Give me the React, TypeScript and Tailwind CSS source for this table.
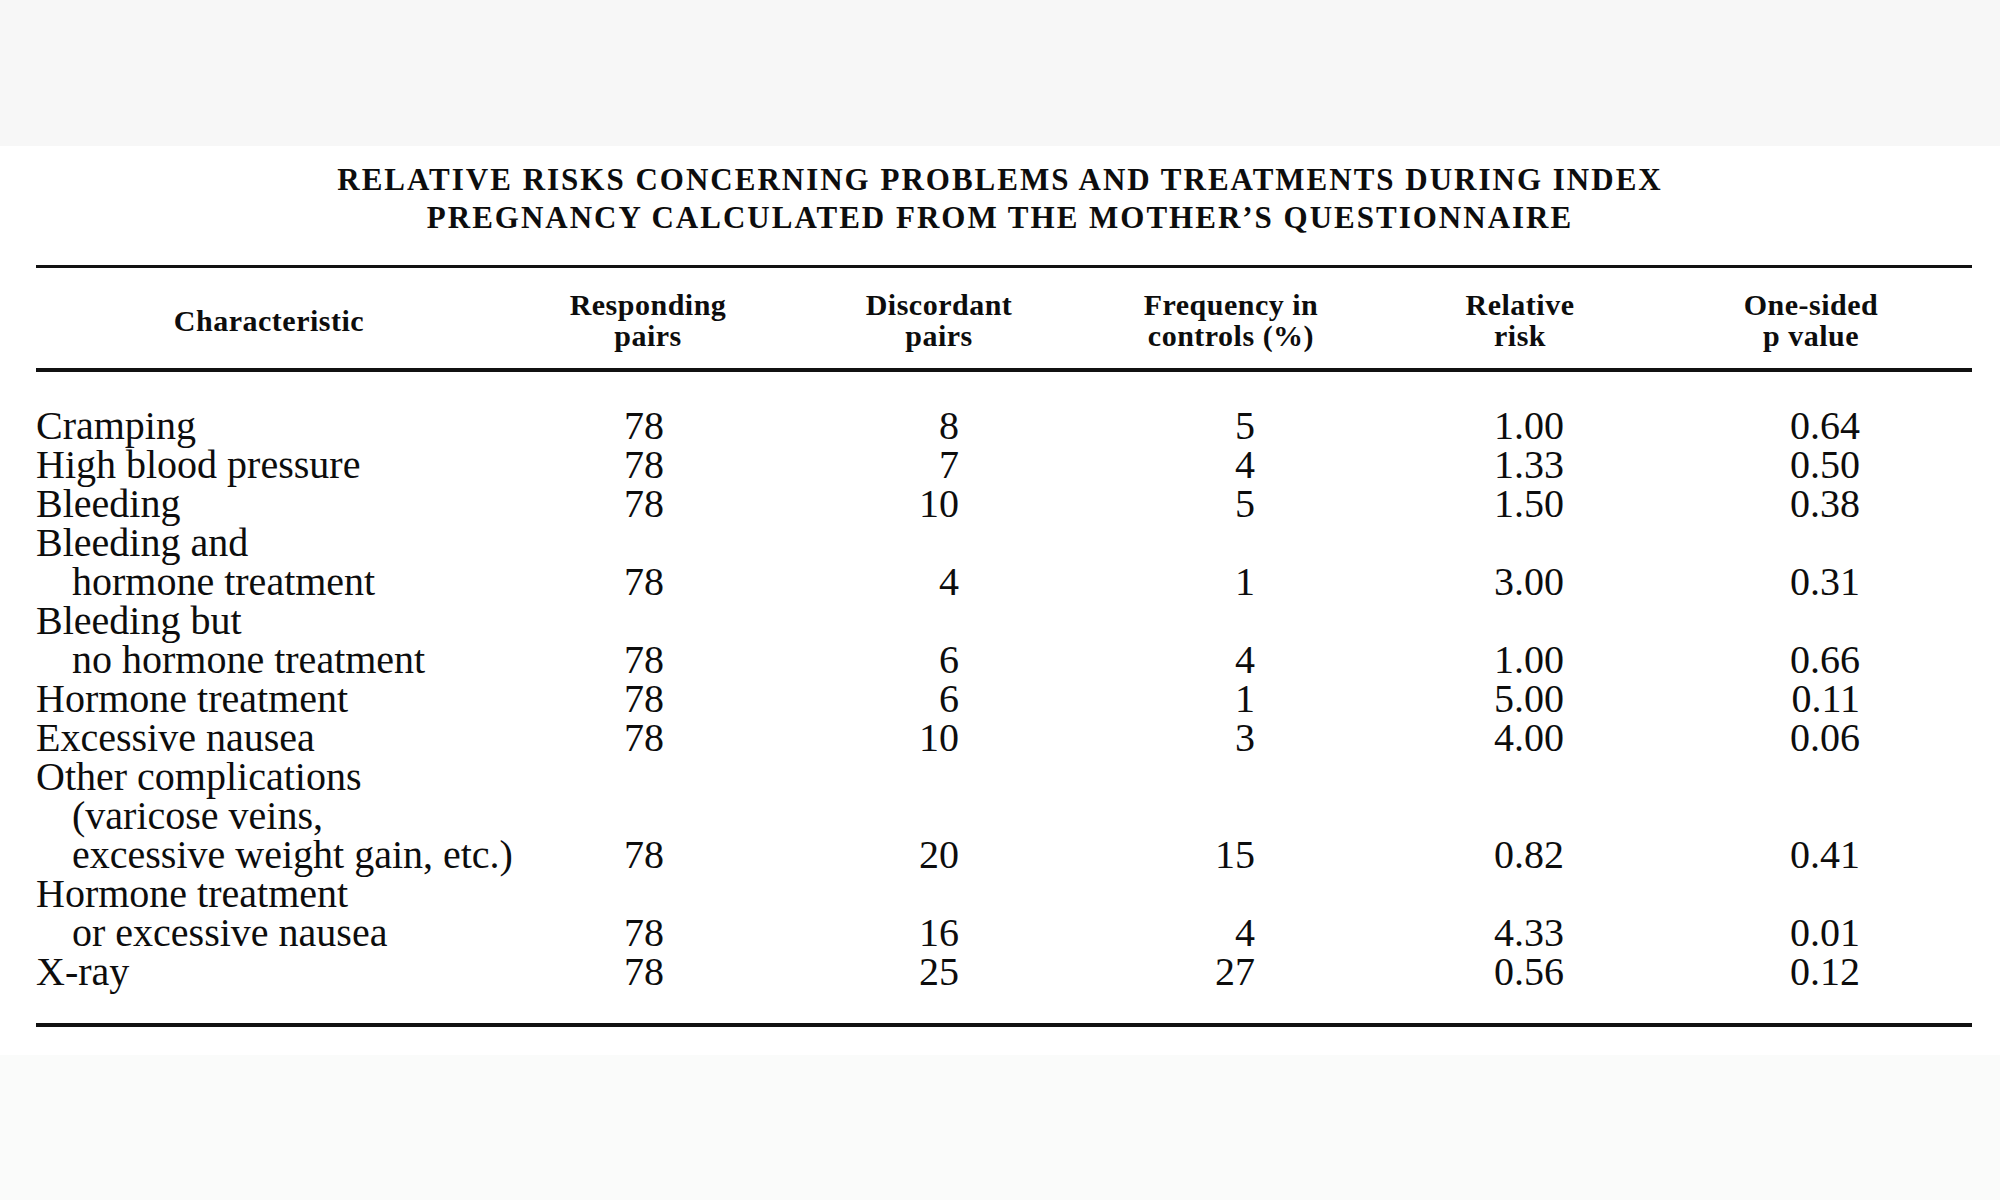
import React from "react";

type Row = { lines: string[]; v: string[] };

const rows: Row[] = [
  { lines: ["Cramping"], v: ["78", "8", "5", "1.00", "0.64"] },
  { lines: ["High blood pressure"], v: ["78", "7", "4", "1.33", "0.50"] },
  { lines: ["Bleeding"], v: ["78", "10", "5", "1.50", "0.38"] },
  { lines: ["Bleeding and", "hormone treatment"], v: ["78", "4", "1", "3.00", "0.31"] },
  { lines: ["Bleeding but", "no hormone treatment"], v: ["78", "6", "4", "1.00", "0.66"] },
  { lines: ["Hormone treatment"], v: ["78", "6", "1", "5.00", "0.11"] },
  { lines: ["Excessive nausea"], v: ["78", "10", "3", "4.00", "0.06"] },
  {
    lines: ["Other complications", "(varicose veins,", "excessive weight gain, etc.)"],
    v: ["78", "20", "15", "0.82", "0.41"],
  },
  { lines: ["Hormone treatment", "or excessive nausea"], v: ["78", "16", "4", "4.33", "0.01"] },
  { lines: ["X-ray"], v: ["78", "25", "27", "0.56", "0.12"] },
];

const valuePad = ["pr-[130px]", "pr-[125px]", "pr-[123px]", "pr-[98px]", "pr-[100px]"];

const grid = "grid grid-cols-[466px_292px_290px_294px_284px_298px]";

export default function App() {
  return (
    <div
      className="w-[2000px] h-[1200px] bg-white text-[#0d0d0d] flex flex-col"
      style={{ fontFamily: '"Liberation Serif", "Times New Roman", serif' }}
    >
      <div className="h-[146px] bg-[#f7f7f7]" />
      <div className="flex flex-col items-center pt-[15px] font-bold text-[31px] leading-[38px] tracking-[2px] uppercase">
        <div>Relative risks concerning problems and treatments during index</div>
        <div>Pregnancy calculated from the mother’s questionnaire</div>
      </div>
      <div className="ml-[36px] w-[1936px] mt-[28px] flex flex-col">
        <div className="h-[3px] bg-[#111]" />
        <div
          className={`${grid} items-center pt-[21px] pb-[17px] font-bold text-[30px] leading-[31px] tracking-[0.5px] text-center`}
        >
          <div>Characteristic</div>
          <div>
            Responding
            <br />
            pairs
          </div>
          <div>
            Discordant
            <br />
            pairs
          </div>
          <div>
            Frequency in
            <br />
            controls (%)
          </div>
          <div>
            Relative
            <br />
            risk
          </div>
          <div>
            One-sided
            <br />
            p value
          </div>
        </div>
        <div className="h-[4px] bg-[#111]" />
        <div className="pt-[34px] pb-[32px] flex flex-col text-[40px] leading-[39px]">
          {rows.map((r, i) => (
            <div key={i} className={`${grid} items-end`}>
              <div className="flex flex-col whitespace-nowrap">
                {r.lines.map((l, j) => (
                  <div key={j} className={j === 0 ? "" : "pl-[36px]"}>
                    {l}
                  </div>
                ))}
              </div>
              {r.v.map((val, k) => (
                <div key={k} className={`text-right ${valuePad[k]}`}>
                  {val}
                </div>
              ))}
            </div>
          ))}
        </div>
        <div className="h-[4px] bg-[#111]" />
      </div>
      <div className="mt-[28px] flex-1 bg-[#fafbfa]" />
    </div>
  );
}
